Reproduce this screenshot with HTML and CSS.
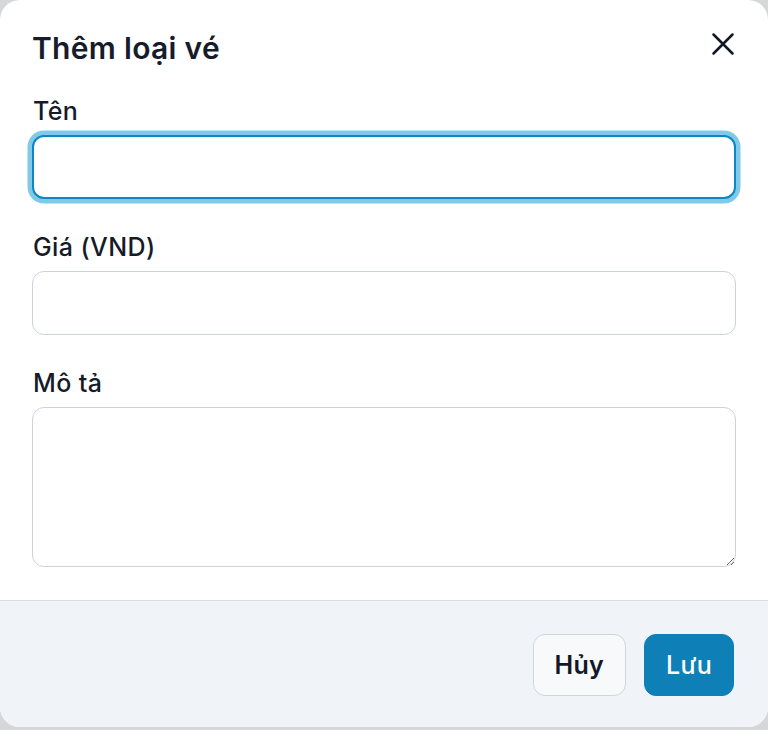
FILE: index.html
```html
<!DOCTYPE html>
<html lang="vi">
<head>
<meta charset="utf-8">
<title>Thêm loại vé</title>
<link rel="stylesheet" href="styles.css">
</head>
<body>
<div class="modal">
  <div class="modal-header">
    <h2 class="modal-title">Thêm loại vé</h2>
    <button class="close-btn" type="button" aria-label="Đóng">
      <svg width="38" height="38" viewBox="0 0 24 24" fill="none" stroke="currentColor" stroke-width="1.6" stroke-linecap="round"><path d="M6 6L18 18M18 6L6 18"/></svg>
    </button>
  </div>
  <div class="modal-body">
    <div class="field">
      <label class="field-label">Tên</label>
      <input class="input input-focus" type="text">
    </div>
    <div class="field">
      <label class="field-label">Giá (VND)</label>
      <input class="input" type="text">
    </div>
    <div class="field">
      <label class="field-label">Mô tả</label>
      <textarea class="input textarea"></textarea>
    </div>
  </div>
  <div class="modal-footer">
    <button class="btn btn-secondary" type="button">Hủy</button>
    <button class="btn btn-primary" type="button">Lưu</button>
  </div>
</div>
</body>
</html>
```
FILE: styles.css
```css
* { box-sizing: border-box; }
html, body {
  margin: 0;
  padding: 0;
  background: #d6d7d9;
  font-family: Inter, "Noto Sans", sans-serif;
  color: #111827;
}
.modal {
  width: 768px;
  background: #ffffff;
  border-radius: 20px;
  overflow: hidden;
}
.modal-header {
  display: flex;
  justify-content: space-between;
  align-items: flex-start;
  padding: 30px 26px 0 32px;
}
.modal-title {
  margin: 0;
  font-size: 30px;
  line-height: 36px;
  font-weight: 600;
  color: #161c2b;
  letter-spacing: 0.3px;
}
.close-btn {
  border: 0;
  background: transparent;
  padding: 0;
  margin-top: -5px;
  width: 38px;
  height: 38px;
  color: #111827;
  display: flex;
}
.modal-body {
  padding: 27px 32px 33px 32px;
  display: flex;
  flex-direction: column;
  gap: 30px;
}
.field {
  display: flex;
  flex-direction: column;
}
.field-label {
  font-size: 25px;
  line-height: 36px;
  font-weight: 500;
  color: #151b28;
  margin-bottom: 6px;
  padding-left: 1px;
  letter-spacing: 0.4px;
}
.input {
  display: block;
  width: 100%;
  height: 64px;
  border: 1.5px solid #cdd2db;
  border-radius: 12px;
  background: #ffffff;
  font-family: inherit;
  font-size: 24px;
  padding: 0 16px;
  outline: none;
}
.input-focus {
  border: 2px solid #0d86c4;
  box-shadow: 0 0 0 4.5px #80c9e9;
}
.textarea {
  height: 160px;
  resize: vertical;
  padding: 12px 16px;
}
.modal-footer {
  background: #f0f3f7;
  border-top: 1.5px solid #d8dce2;
  display: flex;
  justify-content: flex-end;
  align-items: center;
  gap: 18px;
  padding: 33px 34px 31px 34px;
}
.btn {
  height: 62px;
  padding: 0 21px;
  border-radius: 12px;
  font-family: inherit;
  font-size: 25px;
  font-weight: 600;
  letter-spacing: 0.3px;
  line-height: 1;
}
.btn-secondary {
  background: #f8f9fb;
  border: 1.5px solid #d1d5db;
  color: #111827;
}
.btn-primary {
  background: #0e80b7;
  border: 1.5px solid #0e80b7;
  color: #ffffff;
  font-weight: 500;
}
```
